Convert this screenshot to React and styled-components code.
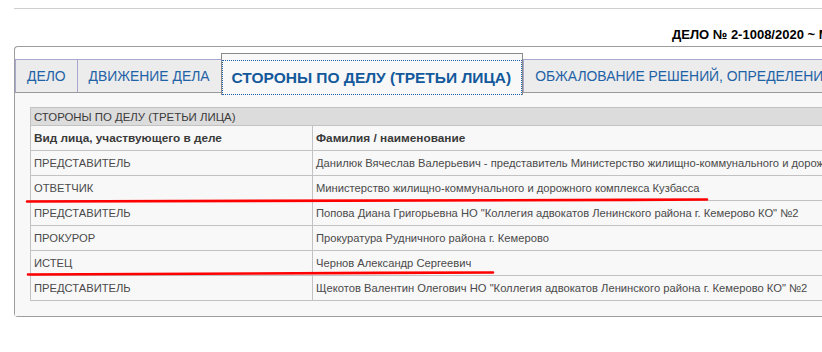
import styled, { createGlobalStyle } from 'styled-components';

const GlobalStyle = createGlobalStyle`
    html, body {
        margin: 0;
        padding: 0;
        background: #fff;
        overflow: hidden;
    }
    body {
        font-family: "Liberation Sans", Arial, sans-serif;
    }
`;

const Page = styled.div`
    position: relative;
    width: 822px;
    height: 352px;
    overflow: hidden;
`;

const Rule = styled.div`
    margin: 8px 0 0 14px;
    border-top: 1px solid #cfcfcf;
`;

const CaseTitle = styled.div`
    margin-top: 18px;
    padding-left: 672px;
    height: 16px;
    line-height: 16px;
    font-size: 13px;
    font-weight: bold;
    color: #000;
    white-space: nowrap;
`;

const Panel = styled.div`
    margin: 3px -200px 0 14px;
    padding-top: 12px;
    background: #fff;
    border: 1px solid #9d9d9d;
    border-right: none;
    border-radius: 4px 0 0 4px;
`;

const TabBar = styled.ul`
    display: flex;
    margin: 0;
    padding: 0;
    list-style: none;
    height: 32px;
    background: #ececec;
    border-top: 1px solid #a9a9cf;
    border-bottom: 1px solid #9a9a9a;
`;

const Tab = styled.li`
    display: flex;
    align-items: center;
    padding: 0 11px;
    border-left: 1px solid #a9a9cf;
    font-size: 13.9px;
    color: #1f62a6;
    white-space: nowrap;
`;

const ActiveTab = styled.li`
    position: relative;
    display: flex;
    margin: -7px 0 -3px;
    padding-top: 6px;
    background: #f8f8f8;
    border: 1px solid #8a8a8a;
    border-bottom: none;
    font-size: 15.5px;
    font-weight: bold;
    color: #13599b;
    white-space: nowrap;
`;

const TabLink = styled.span`
    display: flex;
    align-items: center;
    height: 35px;
    padding: 0 11px 0 10px;
    outline: 1px dotted #1d5fa8;
    outline-offset: -1px;
`;

const Content = styled.div`
    background: #f8f8f8;
    padding: 14px 0 15px 15px;
`;

const Table = styled.table`
    border-collapse: collapse;
    table-layout: fixed;
    width: 920px;
    font-size: 11.2px;
    color: #4a4a4a;
`;

const Caption = styled.td`
    height: 17px;
    padding: 0 3px;
    background: #dcdcdc;
    border: 1px solid #c2c2c2;
    font-size: 11.4px;
    color: #3a3a3a;
    text-align: left;
`;

const Head = styled.th`
    height: 24px;
    padding: 0 3px;
    border: 1px solid #c2c2c2;
    font-size: 11.8px;
    font-weight: bold;
    color: #3a3a3a;
    text-align: left;
`;

const Cell = styled.td`
    height: 24px;
    padding: 0 3px;
    border: 1px solid #c2c2c2;
    white-space: nowrap;
    overflow: hidden;
`;

const Marks = styled.svg`
    position: absolute;
    left: 0;
    top: 0;
    pointer-events: none;
`;

const rows = [
    ['ПРЕДСТАВИТЕЛЬ', 'Данилюк Вячеслав Валерьевич - представитель Министерство жилищно-коммунального и дорожного комплекса Кузбасса'],
    ['ОТВЕТЧИК', 'Министерство жилищно-коммунального и дорожного комплекса Кузбасса'],
    ['ПРЕДСТАВИТЕЛЬ', 'Попова Диана Григорьевна НО "Коллегия адвокатов Ленинского района г. Кемерово КО" №2'],
    ['ПРОКУРОР', 'Прокуратура Рудничного района г. Кемерово'],
    ['ИСТЕЦ', 'Чернов Александр Сергеевич'],
    ['ПРЕДСТАВИТЕЛЬ', 'Щекотов Валентин Олегович НО "Коллегия адвокатов Ленинского района г. Кемерово КО" №2'],
];

export default function App() {
    return (
        <Page>
            <GlobalStyle />
            <Rule />
            <CaseTitle>ДЕЛО № 2-1008/2020 ~ М-4362/2020</CaseTitle>
            <Panel>
                <TabBar>
                    <Tab>ДЕЛО</Tab>
                    <Tab>ДВИЖЕНИЕ ДЕЛА</Tab>
                    <ActiveTab>
                        <TabLink>СТОРОНЫ ПО ДЕЛУ (ТРЕТЬИ ЛИЦА)</TabLink>
                    </ActiveTab>
                    <Tab>ОБЖАЛОВАНИЕ РЕШЕНИЙ, ОПРЕДЕЛЕНИЙ (ПОСТ.)</Tab>
                </TabBar>
                <Content>
                    <Table>
                        <colgroup>
                            <col style={{ width: 282 }} />
                            <col />
                        </colgroup>
                        <tbody>
                            <tr>
                                <Caption colSpan={2}>СТОРОНЫ ПО ДЕЛУ (ТРЕТЬИ ЛИЦА)</Caption>
                            </tr>
                            <tr>
                                <Head>Вид лица, участвующего в деле</Head>
                                <Head>Фамилия / наименование</Head>
                            </tr>
                            {rows.map((r, i) => (
                                <tr key={i}>
                                    <Cell>{r[0]}</Cell>
                                    <Cell>{r[1]}</Cell>
                                </tr>
                            ))}
                        </tbody>
                    </Table>
                </Content>
            </Panel>
            <Marks width="822" height="352" viewBox="0 0 822 352">
                <path d="M27 201.5 C 180 200.5, 450 201, 707 199.5" stroke="#ff0000" strokeWidth="2.6" fill="none" strokeLinecap="round" />
                <path d="M28 274.5 C 150 273.8, 330 273, 493 272.5" stroke="#ff0000" strokeWidth="2.6" fill="none" strokeLinecap="round" />
            </Marks>
        </Page>
    );
}
